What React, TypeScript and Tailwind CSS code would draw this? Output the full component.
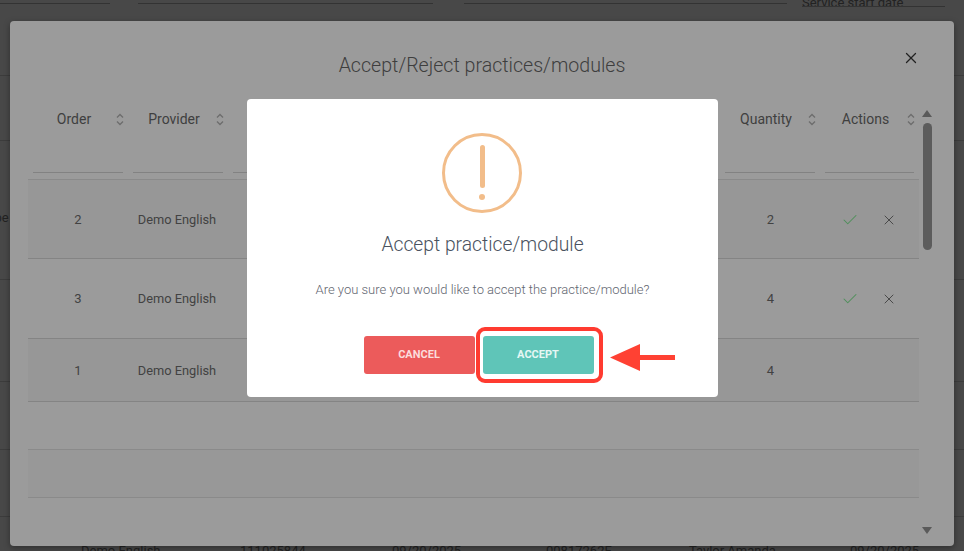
import { Check, X } from "lucide-react";

const rows = [
  { order: "2", qty: "2", actions: true, h: "h-[79px] pt-[2px] bg-[#979797]" },
  { order: "3", qty: "4", actions: true, h: "h-[80px]" },
  { order: "1", qty: "4", actions: false, h: "h-[63px] pt-[2px] bg-[#979797]" },
];

function SortIcon() {
  return (
    <svg width="8" height="13" viewBox="0 0 8 13" fill="none" stroke="#6e6e6e" strokeWidth="1.4">
      <path d="M1 4.5 4 1.5l3 3" />
      <path d="M1 8.5l3 3 3-3" />
    </svg>
  );
}

function HeaderCell({ label, className }: { label: string; className: string }) {
  return (
    <div className={`px-[5px] pb-[6px] ${className}`}>
      <div className="flex h-[72px] items-start pt-[11px]">
        <span className="flex-1 text-center text-[14px] leading-[16px] text-[#3f3f3f]">{label}</span>
        <span className="flex h-4 w-[8px] translate-x-[1px] items-center justify-center">
          <SortIcon />
        </span>
      </div>
      <div className="h-px bg-[#828282]" />
    </div>
  );
}

export default function App() {
  return (
    <div className="relative h-[551px] w-[964px] overflow-hidden bg-[#484848] font-['Roboto',sans-serif]">
      {/* page behind the overlay */}
      <div className="flex h-[76px] border-b border-[#3c3c3c]">
        <div className="h-[4px] w-[110px] border-b border-[#333333]" />
        <div className="ml-[28px] h-[4px] w-[295px] border-b border-[#333333]" />
        <div className="ml-[31px] h-[4px] w-[323px] border-b border-[#333333]" />
        <div className="ml-[15px] h-[7px] w-[143px] overflow-hidden border-b border-[#333333] text-[13px] leading-[6px] text-[#222222]">
          Service start date
        </div>
      </div>
      <div className="h-[65px] border-b border-[#3c3c3c]" />
      <div className="flex h-[139px] items-center overflow-hidden border-b border-[#3c3c3c] pt-[16px] text-[13px] text-[#222222]">
        <span className="-ml-[19px]">Type</span>
      </div>
      <div className="h-[102px] border-b border-[#3c3c3c]" />
      <div className="h-[68px] border-b border-[#3c3c3c]" />
      <div className="h-[67px] border-b border-[#3c3c3c]" />
      <div className="flex pt-[26px] text-[13px] leading-[16px] text-[#222222]">
        <span className="ml-[81px] w-[159px]">Demo English</span>
        <span className="w-[152px]">111025844</span>
        <span className="w-[154px]">09/20/2025</span>
        <span className="w-[143px]">00817262F</span>
        <span className="w-[161px]">Taylor Amanda</span>
        <span>09/20/2025</span>
      </div>

      {/* practices modal */}
      <div className="absolute inset-x-[10px] bottom-[5px] top-[21px] rounded-[4px] bg-[#9b9b9b] shadow-[0_2px_6px_rgba(0,0,0,0.35)]">
        <div className="relative flex h-[79px] items-start justify-center pt-[32px]">
          <h2 className="text-[19.6px] font-light leading-[26px] text-[#3e3e3e]">Accept/Reject practices/modules</h2>
          <X className="absolute right-[34px] top-[28px] h-[18px] w-[18px] text-[#222222]" strokeWidth={1.7} />
        </div>

        <div className="flex pl-[18px] pr-[22px]">
          <div className="w-[892px]">
            <div className="flex border-b border-[#8a8a8a]">
              <HeaderCell label="Order" className="w-[100px]" />
              <HeaderCell label="Provider" className="w-[100px]" />
              <div className="flex-1 px-[5px] pt-[72px]">
                <div className="h-px bg-[#828282]" />
              </div>
              <HeaderCell label="Quantity" className="w-[100px]" />
              <HeaderCell label="Actions" className="w-[99px]" />
            </div>

            {rows.map((row) => (
              <div key={row.order} className={`flex items-center border-b border-[#848484] text-[13px] text-[#424242] ${row.h}`}>
                <span className="w-[100px] text-center">{row.order}</span>
                <span className="w-[100px] pr-[2px] text-center text-[12.8px]">Demo English</span>
                <span className="flex-1" />
                <span className="w-[100px] pl-[1px] text-center">{row.qty}</span>
                <span className="flex w-[99px] items-center gap-[22px] pl-[21px]">
                  {row.actions && (
                    <>
                      <Check className="h-[18px] w-[18px] text-[#4e8f5a]" strokeWidth={1.4} />
                      <X className="h-[16px] w-[16px] text-[#4a4a4a]" strokeWidth={1.5} />
                    </>
                  )}
                </span>
              </div>
            ))}
            <div className="h-[48px] border-b border-[#8a8a8a]" />
            <div className="h-[48px] border-b border-[#8a8a8a] bg-[#989898]" />
          </div>

          <div className="ml-[3px] flex h-[434px] w-[10px] flex-col items-center pt-[10px]">
            <div className="h-0 w-0 border-x-[5px] border-b-[7px] border-x-transparent border-b-[#5a5a5a]" />
            <div className="mt-[6px] h-[127px] w-[9px] rounded-full bg-[#5c5c5c]" />
            <div className="mt-auto h-0 w-0 border-x-[5px] border-t-[7px] border-x-transparent border-t-[#5a5a5a]" />
          </div>
        </div>
      </div>

      {/* confirm dialog */}
      <div className="absolute left-[247px] top-[99px] flex h-[298px] w-[471px] flex-col items-center rounded-[4px] bg-white pt-[34px]">
        <div className="mr-[1px] flex h-[80px] w-[80px] flex-col items-center rounded-full border-[3px] border-[#f2bd8a] pt-[9px]">
          <div className="h-[43px] w-[5px] rounded-full bg-[#f2bd8a]" />
          <div className="mt-[6px] h-[6px] w-[6px] rounded-full bg-[#f2bd8a]" />
        </div>
        <h3 className="mt-[20px] text-[19.3px] font-light leading-[24px] text-[#4a5260]">Accept practice/module</h3>
        <p className="mt-[25px] text-[13px] font-light leading-[16px] text-[#5f6670]">
          Are you sure you would like to accept the practice/module?
        </p>
        <div className="mt-[38px] mr-[8px] flex gap-[8px]">
          <button className="h-[38px] w-[111px] rounded-[3px] bg-[#ec5b5b] text-[11px] font-bold text-[#fbdcdc]">CANCEL</button>
          <div className="relative">
            <button className="h-[38px] w-[111px] rounded-[3px] bg-[#5fc5b8] text-[11px] font-bold text-[#e6f7f4]">ACCEPT</button>
            {/* annotation */}
            <div className="absolute -left-[7px] -right-[9px] -inset-y-[9px] rounded-[9px] border-[4px] border-[#ff3b30]" />
            <svg className="absolute left-[127px] top-[8px]" width="66" height="27" viewBox="0 0 66 27" fill="#ff4133">
              <path d="M0 13.5 30 0v11h35v5H30v11z" />
            </svg>
          </div>
        </div>
      </div>
    </div>
  );
}
